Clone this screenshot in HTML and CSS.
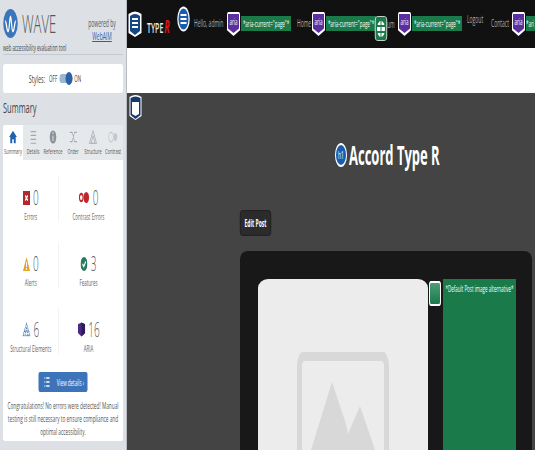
FILE: index.html
```html
<!DOCTYPE html>
<html lang="en">
<head>
    <meta charset="UTF-8">
    <meta name="viewport" content="width=device-width, initial-scale=1.0">
    <title>WAVE - Accord Type R</title>
    <link rel="stylesheet" href="styles.css">
</head>
<body>
    <svg class="defs" width="0" height="0">
        <symbol id="shield-blue" viewBox="0 0 28 28">
            <path d="M1 4Q14 -1 27 4V23L14 27 1 23Z" fill="#fff"/>
            <path d="M4 6Q14 2 24 6V21L14 25 4 21Z" fill="#15468a"/>
            <path d="M8 9H20M8 13H20M8 17H20" stroke="#fff" stroke-width="2"/>
        </symbol>
        <symbol id="shield-main" viewBox="0 0 26 26">
            <path d="M1 3Q13 -1 25 3V22L13 26 1 22Z" fill="#fff"/>
            <path d="M3 4Q13 1 23 4V21L13 25 3 21Z" fill="#15386f"/>
            <path d="M6 8H20V20L13 22 6 20Z" fill="#fff"/>
        </symbol>
        <symbol id="circle-list" viewBox="0 0 26 26">
            <ellipse cx="13" cy="13" rx="12.5" ry="12.5" fill="#fff"/>
            <ellipse cx="13" cy="13" rx="10" ry="10.5" fill="#1a5bb0"/>
            <path d="M7 9H19M7 13H19M7 17H19" stroke="#fff" stroke-width="2"/>
        </symbol>
    </svg>

    <div class="stage">
        <aside class="sidebar">
            <div class="brand">
                <div class="brand-top">
                    <svg class="logo" viewBox="0 0 30 30">
                        <circle cx="15" cy="15" r="15" fill="#3d76b8"/>
                        <path d="M4 13C7 13 7 23 10 23S13 8 15 8 17 23 20 23 23 13 26 13" fill="none" stroke="#fff" stroke-width="2.5"/>
                    </svg>
                    <span class="wave">WAVE</span>
                    <div class="powered">powered by<br><a href="#">WebAIM</a></div>
                </div>
                <div class="tagline">web accessibility evaluation tool</div>
            </div>

            <div class="styles-card">
                <span class="styles-label">Styles:</span>
                <span class="small">OFF</span>
                <span class="toggle"><span class="knob"></span></span>
                <span class="small">ON</span>
            </div>

            <h2 class="summary-title">Summary</h2>

            <div class="panel">
                <div class="tabs">
                    <div class="tab active">
                        <svg viewBox="0 0 24 18"><path d="M12 1 2 9H5V17H10V12H14V17H19V9H22Z" fill="#1f62ad"/></svg>
                        <span>Summary</span>
                    </div>
                    <div class="tab">
                        <svg viewBox="0 0 24 18"><path d="M6 2H20M6 7H20M6 12H20M6 17H20" stroke="#a2a8af" stroke-width="1.5"/></svg>
                        <span>Details</span>
                    </div>
                    <div class="tab">
                        <svg viewBox="0 0 24 18"><circle cx="12" cy="9" r="8.5" fill="#8b929a"/><path d="M12 7V14M12 3V5" stroke="#dfe3e7" stroke-width="2.5"/></svg>
                        <span>Reference</span>
                    </div>
                    <div class="tab">
                        <svg viewBox="0 0 24 18"><path d="M4 3H10L16 15H22M4 15H10L16 3H22" fill="none" stroke="#a2a8af" stroke-width="1.5"/></svg>
                        <span>Order</span>
                    </div>
                    <div class="tab">
                        <svg viewBox="0 0 24 18"><path d="M12 1 21 17H3ZM12 7 7 17M12 7 17 17" fill="none" stroke="#a2a8af" stroke-width="1.5"/></svg>
                        <span>Structure</span>
                    </div>
                    <div class="tab">
                        <svg viewBox="0 0 24 18"><circle cx="7" cy="9" r="6" fill="none" stroke="#c4c9ce" stroke-width="2"/><circle cx="18" cy="9" r="5" fill="#c4c9ce"/></svg>
                        <span>Contrast</span>
                    </div>
                </div>

                <div class="stats">
                    <div class="stat">
                        <div class="stat-value">
                            <svg class="narrow" viewBox="0 0 14 14"><rect width="14" height="14" fill="#b3282d"/><path d="M4.5 4.5 9.5 9.5M9.5 4.5 4.5 9.5" stroke="#fff" stroke-width="2"/></svg>
                            <b>0</b>
                        </div>
                        <span>Errors</span>
                    </div>
                    <div class="stat">
                        <div class="stat-value">
                            <svg class="wide" viewBox="0 0 24 12"><circle cx="6" cy="6" r="4" fill="#fff" stroke="#c0272d" stroke-width="2.5"/><circle cx="17" cy="6" r="6" fill="#c0272d"/></svg>
                            <b>0</b>
                        </div>
                        <span>Contrast Errors</span>
                    </div>
                    <div class="stat">
                        <div class="stat-value">
                            <svg class="narrow" viewBox="0 0 14 14"><path d="M7 0 14 14H0Z" fill="#e5a12c"/><path d="M7 5V10M7 11V13" stroke="#fff" stroke-width="2"/></svg>
                            <b>0</b>
                        </div>
                        <span>Alerts</span>
                    </div>
                    <div class="stat">
                        <div class="stat-value">
                            <svg class="narrow" viewBox="0 0 14 14"><circle cx="7" cy="7" r="7" fill="#2b7a5f"/><path d="M4 7 6.5 9.5 10.5 4.5" fill="none" stroke="#fff" stroke-width="2"/></svg>
                            <b>3</b>
                        </div>
                        <span>Features</span>
                    </div>
                    <div class="stat">
                        <div class="stat-value">
                            <svg class="narrow struct" viewBox="0 0 16 14"><path d="M8 1 15 13H1ZM8 5 5 13M8 5 11 13M4 9H12" fill="none" stroke="#4a80bd" stroke-width="1.5" stroke-dasharray="1.5 .8"/></svg>
                            <b>6</b>
                        </div>
                        <span>Structural Elements</span>
                    </div>
                    <div class="stat">
                        <div class="stat-value">
                            <svg class="narrow struct" viewBox="0 0 18 16"><path d="M1 2 9 0 17 2V12L9 16 1 12Z" fill="#4a2a85"/><path d="M9 0 17 2V12L9 16Z" fill="#2f1a5c"/></svg>
                            <b>16</b>
                        </div>
                        <span>ARIA</span>
                    </div>
                </div>

                <div class="details-row">
                    <a class="details-btn" href="#">
                        <svg viewBox="0 0 22 24"><path d="M1 4H4M8 4H21M1 12H4M8 12H21M1 20H4M8 20H21" stroke="#fff" stroke-width="3"/></svg>
                        View details ›
                    </a>
                </div>
                <p class="congrats">Congratulations! No errors were detected! Manual testing is still necessary to ensure compliance and optimal accessibility.</p>
            </div>
        </aside>

        <div class="site">
            <nav class="topbar">
                <svg class="ico-shield"><use href="#shield-blue"/></svg>
                <span class="site-name">TYPE<em>R</em></span>
                <svg class="ico-circle"><use href="#circle-list"/></svg>
                <a class="nav-link hello" href="#">Hello, admin</a>
                <span class="ico-aria"><span>aria</span></span>
                <span class="tag">*aria-current="page"*</span>
                <a class="nav-link home" href="#">Home</a>
                <span class="ico-aria"><span>aria</span></span>
                <span class="tag">*aria-current="page"*</span>
                <span class="ico-globe"><svg viewBox="0 0 18 18"><circle cx="9" cy="9" r="8" fill="#fff"/><path d="M1 6H17M1 12H17M9 1V17" stroke="#1a7a4a" stroke-width="2"/></svg></span>
                <a class="nav-link forum" href="#">um</a>
                <span class="ico-aria"><span>aria</span></span>
                <span class="tag">*aria-current="page"*</span>
                <a class="nav-link logout" href="#">Logout</a>
                <a class="nav-link contact" href="#">Contact</a>
                <span class="ico-aria"><span>aria</span></span>
                <span class="tag tag-last">*ari</span>
            </nav>

            <div class="whitebar"></div>

            <main class="content">
                <svg class="main-shield"><use href="#shield-main"/></svg>
                <div class="title-row">
                    <span class="h1-badge">h1</span>
                    <h1>Accord Type R</h1>
                </div>
                <a class="edit-btn" href="#">Edit Post</a>
                <section class="post">
                    <div class="placeholder">
                        <svg viewBox="0 0 184 127">
                            <rect x="5" y="4" width="174" height="160" rx="10" fill="none" stroke="#d8d8d8" stroke-width="10"/>
                            <path d="M28 98 70 30 98 72 102 82 126 54 156 98Z" fill="#d8d8d8"/>
                        </svg>
                    </div>
                    <div class="alt-col">
                        <span class="ico-alt"></span>
                        <div class="alt-text">*Default Post image alternative*</div>
                    </div>
                </section>
            </main>
        </div>
    </div>
</body>
</html>
```

FILE: styles.css
```css
html, body {
    margin: 0;
    padding: 0;
    height: 450px;
    overflow: hidden;
}
.defs {
    position: absolute;
}
/* the whole capture is squashed to half its width */
.stage {
    display: flex;
    width: 1070px;
    height: 450px;
    transform: scaleX(0.5);
    transform-origin: 0 0;
    font-family: "Open Sans", sans-serif;
    background-color: #444;
}

/* sidebar */
.sidebar {
    width: 254px;
    flex-shrink: 0;
    box-sizing: border-box;
    padding: 0 6px;
    background-color: #dde1e6;
    color: #444;
    border-right: 2px solid #b9bdc1;
}
.brand {
    height: 54px;
    border-bottom: 1px solid #c6cacf;
}
.brand-top {
    display: flex;
    padding-top: 9px;
    height: 30px;
}
.logo {
    width: 30px;
    height: 29px;
    flex-shrink: 0;
}
.wave {
    margin-left: 8px;
    font-size: 26px;
    font-weight: 300;
    line-height: 29px;
    color: #555;
}
.powered {
    margin-left: auto;
    margin-right: 10px;
    padding-top: 8px;
    font-size: 10px;
    line-height: 13px;
    text-align: center;
    width: 64px;
    color: #555;
}
.powered a {
    color: #2a5fb0;
}
.tagline {
    margin-top: 3px;
    font-size: 8.5px;
    white-space: nowrap;
}
.styles-card {
    display: flex;
    align-items: center;
    justify-content: center;
    gap: 4px;
    height: 29px;
    margin-top: 9px;
    background-color: #fff;
    border-radius: 4px;
    padding-right: 32px;
}
.styles-label {
    font-size: 11px;
    margin-right: 4px;
}
.small {
    font-size: 9px;
}
.toggle {
    display: block;
    position: relative;
    width: 26px;
    height: 9px;
    border-radius: 5px;
    background-color: #9ab8d0;
}
.knob {
    position: absolute;
    right: 0;
    top: -2px;
    width: 14px;
    height: 13px;
    border-radius: 50%;
    background-color: #2a62a8;
}
.summary-title {
    margin: 4px 0 8px;
    font-size: 15px;
    font-weight: 400;
    line-height: 20px;
    color: #444;
}
.panel {
    background-color: #fff;
    border-radius: 4px;
    height: 316px;
    overflow: hidden;
}
.tabs {
    display: flex;
    height: 35px;
    background-color: #e6e9ec;
}
.tab {
    flex: 1;
    display: flex;
    flex-direction: column;
    align-items: center;
    padding-top: 5px;
    font-size: 8px;
    line-height: 11px;
    color: #555;
    white-space: nowrap;
}
.tab svg {
    width: 24px;
    height: 14px;
    margin-bottom: 1px;
}
.tab.active {
    background-color: #fff;
}
.stats {
    display: grid;
    grid-template-columns: 112px 1fr;
    grid-auto-rows: 66px;
    padding: 16px 10px 0 0;
}
.stat {
    display: flex;
    flex-direction: column;
    align-items: center;
    box-sizing: border-box;
    height: 46px;
    padding-top: 8px;
    font-size: 9px;
    line-height: 11px;
    color: #666;
    white-space: nowrap;
}
.stat:nth-child(odd) {
    border-right: 1px solid #e8e8e8;
}
.stat-value {
    display: flex;
    align-items: center;
    gap: 6px;
    height: 28px;
}
.stat-value svg.narrow {
    width: 14px;
    height: 14px;
}
.stat-value svg.struct {
    width: 16px;
    height: 15px;
}
.stat-value svg.wide {
    width: 22px;
    height: 11px;
}
.stat-value b {
    font-size: 20px;
    font-weight: 300;
    color: #555;
}
.details-row {
    display: flex;
    justify-content: center;
    margin-top: -2px;
}
.details-btn {
    display: flex;
    align-items: center;
    justify-content: center;
    gap: 10px;
    width: 98px;
    height: 20px;
    background-color: #3d74b9;
    border-radius: 3px;
    color: #fff;
    font-size: 9px;
    text-decoration: none;
}
.details-btn svg {
    width: 20px;
    height: 12px;
}
.congrats {
    margin: 7px 8px 0;
    font-size: 9.5px;
    line-height: 13px;
    text-align: center;
    color: #555;
}

/* site under test */
.site {
    flex: 1;
    min-width: 0;
}
.topbar {
    display: flex;
    align-items: flex-start;
    height: 48px;
    box-sizing: border-box;
    padding-left: 2px;
    background-color: #111;
    color: #aaa;
    font-size: 10px;
    white-space: nowrap;
    overflow: hidden;
}
.ico-shield {
    width: 28px;
    height: 28px;
    margin-top: 10px;
    flex-shrink: 0;
}
.site-name {
    margin: 18px 0 0 10px;
    width: 50px;
    font-size: 14px;
    line-height: 16px;
    font-weight: 600;
    color: #eee;
}
.site-name em {
    color: #d2161c;
    font-weight: 700;
    font-size: 18px;
    margin-left: 2px;
}
.ico-circle {
    width: 26px;
    height: 26px;
    margin: 6px 8px 0 10px;
    flex-shrink: 0;
}
.nav-link {
    color: #aaa;
    text-decoration: none;
    margin-top: 16px;
    line-height: 14px;
}
.hello {
    width: 66px;
}
.home {
    width: 30px;
    margin-left: 12px;
}
.forum {
    width: 22px;
    margin-top: 17px;
}
.logout {
    width: 38px;
    margin: 12px 0 0 10px;
}
.contact {
    width: 42px;
    margin-left: 10px;
}
.ico-aria {
    display: flex;
    box-sizing: border-box;
    width: 26px;
    height: 24px;
    margin-top: 12px;
    padding: 2px 2px 0;
    flex-shrink: 0;
    background-color: #fff;
    clip-path: polygon(0 0, 100% 0, 100% 76%, 50% 100%, 0 76%);
    border-radius: 3px 3px 0 0;
}
.ico-aria span {
    flex: 1;
    height: 19px;
    background-color: #5b2fa0;
    clip-path: polygon(0 0, 100% 0, 100% 76%, 50% 100%, 0 76%);
    color: #fff;
    font-size: 9px;
    line-height: 16px;
    text-align: center;
}
.tag {
    width: 100px;
    flex-shrink: 0;
    margin: 16px 0 0 2px;
    background-color: #1a7a4a;
    color: #fff;
    font-size: 9px;
    line-height: 15px;
    text-align: center;
    overflow: hidden;
}
.tag-last {
    width: 18px;
    text-align: left;
}
.ico-globe {
    display: flex;
    align-items: center;
    justify-content: center;
    width: 24px;
    height: 25px;
    margin: 16px 0 0 -2px;
    box-sizing: border-box;
    flex-shrink: 0;
    background-color: #1a7a4a;
    border: 1px solid #fff;
    border-radius: 5px;
}
.ico-globe svg {
    width: 18px;
    height: 18px;
}
.whitebar {
    height: 45px;
    background-color: #fff;
}
.content {
    position: relative;
    height: 357px;
    overflow: hidden;
    background-color: #444;
    color: #fff;
}
.main-shield {
    position: absolute;
    left: 4px;
    top: 1px;
    width: 26px;
    height: 26px;
}
.title-row {
    display: flex;
    align-items: center;
    gap: 4px;
    height: 28px;
    padding: 48px 0 0 416px;
}
.h1-badge {
    display: flex;
    align-items: center;
    justify-content: center;
    box-sizing: border-box;
    width: 24px;
    height: 24px;
    border: 2px solid #fff;
    border-radius: 50%;
    background-color: #1a5bb0;
    font-size: 10px;
}
h1 {
    margin: 0;
    font-size: 26px;
    font-weight: 700;
    line-height: 28px;
    white-space: nowrap;
}
.edit-btn {
    display: flex;
    align-items: center;
    justify-content: center;
    width: 62px;
    height: 26px;
    margin: 41px 0 0 226px;
    box-sizing: border-box;
    background-color: #2b2b2b;
    border: 1px solid #1a1a1a;
    border-radius: 5px;
    color: #fff;
    font-size: 10px;
    font-weight: 700;
    text-decoration: none;
}
.post {
    display: flex;
    box-sizing: border-box;
    margin: 15px 0 0 226px;
    width: 584px;
    height: 228px;
    padding: 28px 0 0 36px;
    background-color: #181818;
    border-radius: 16px 16px 0 0 / 8px 8px 0 0;
}
.placeholder {
    width: 340px;
    height: 200px;
    padding-top: 73px;
    box-sizing: border-box;
    background-color: #ececec;
    border-radius: 20px 20px 0 0 / 9px 9px 0 0;
    text-align: center;
}
.placeholder svg {
    width: 184px;
    height: 127px;
    display: inline-block;
}
.alt-col {
    display: flex;
    align-items: flex-start;
}
.ico-alt {
    display: block;
    width: 24px;
    height: 25px;
    margin: 2px 4px 0 2px;
    box-sizing: border-box;
    background: linear-gradient(#4e9c78, #1a7a4a);
    border: 2px solid #fff;
    border-radius: 4px;
}
.alt-text {
    width: 146px;
    height: 200px;
    box-sizing: border-box;
    padding-top: 3px;
    background-color: #1a7a4a;
    color: #fff;
    font-size: 9px;
    text-align: center;
    white-space: nowrap;
}
```
